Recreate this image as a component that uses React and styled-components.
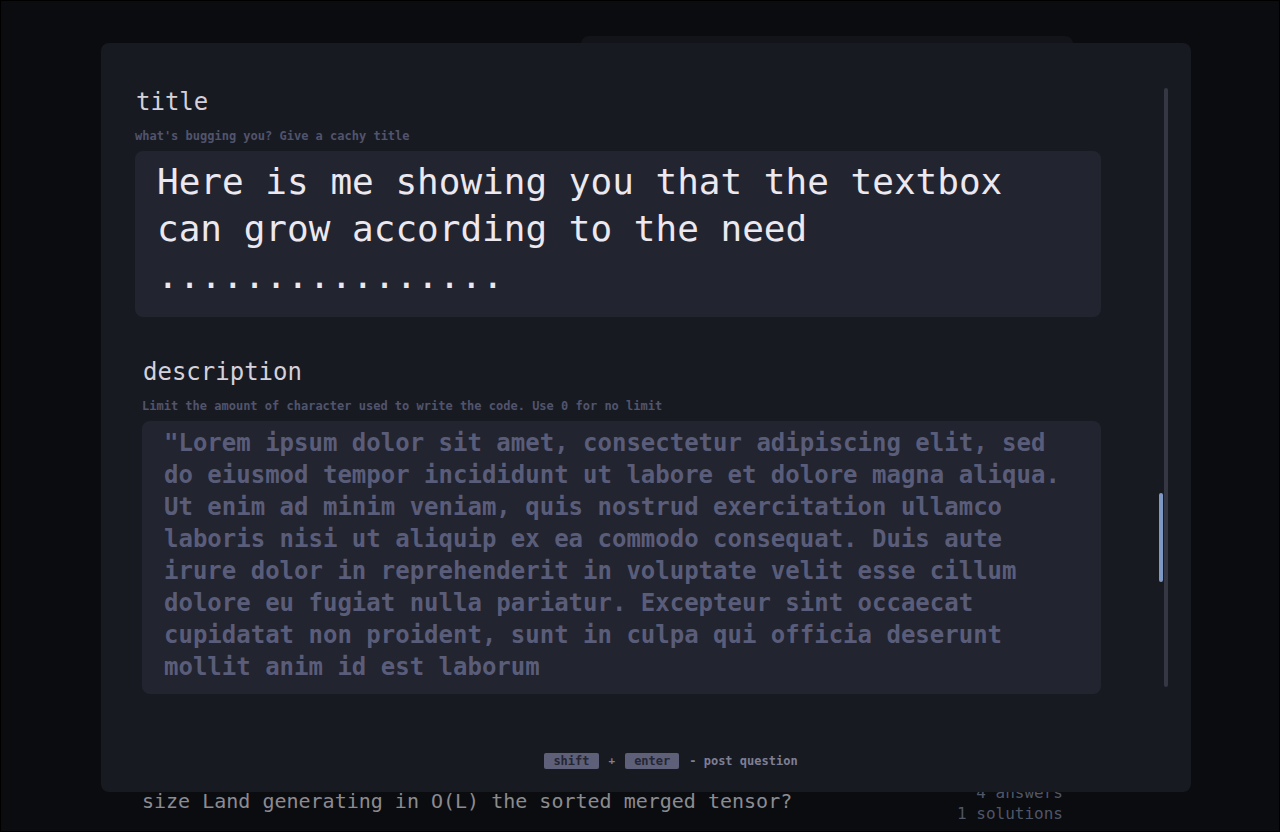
import React from "react";
import styled, { createGlobalStyle } from "styled-components";

const mono = `"DejaVu Sans Mono", "Liberation Mono", monospace`;

const GlobalStyle = createGlobalStyle`
  body {
    margin: 0;
    background: #0b0c10;
    font-family: ${mono};
  }
`;

const Page = styled.div`
  position: relative;
  width: 1280px;
  height: 832px;
  box-sizing: border-box;
  border: 1px solid #000;
  background: #0b0c10;
  overflow: hidden;
`;

const Feed = styled.div`
  display: flex;
  flex-direction: column;
  padding: 35px 216px 0 141px;
`;

const SearchCard = styled.div`
  align-self: flex-end;
  width: 492px;
  height: 60px;
  margin-right: -10px;
  border-radius: 8px;
  background: #13141a;
`;

const QuestionRow = styled.div`
  display: flex;
  justify-content: space-between;
  align-items: flex-start;
  margin-top: 686px;
`;

const QuestionText = styled.div`
  display: flex;
  flex-direction: column;
`;

const QuestionTitle = styled.div`
  margin-top: 6px;
  font-size: 20px;
  line-height: 26px;
  color: #8b8b90;
  white-space: nowrap;
`;

const Excerpt = styled.div`
  margin-top: 14px;
  font-size: 16px;
  line-height: 20px;
  color: #363842;
  white-space: nowrap;
`;

const Stats = styled.div`
  font-size: 16px;
  line-height: 21px;
  color: #4f5668;
  text-align: right;
  white-space: pre;
`;

const Modal = styled.div`
  position: absolute;
  top: 42px;
  left: 100px;
  width: 1090px;
  height: 749px;
  display: flex;
  flex-direction: column;
  border-radius: 8px;
  background: #181a22;
`;

const Body = styled.div`
  flex: 1;
  display: flex;
`;

const Content = styled.div`
  width: 966px;
  padding: 43px 0 0 34px;
  display: flex;
  flex-direction: column;
  gap: 39px;
`;

const Field = styled.div`
  display: flex;
  flex-direction: column;
  margin-left: ${(p) => p.$indent || 0}px;
`;

const Label = styled.label`
  font-size: 24px;
  line-height: 32px;
  color: #d4d1da;
  padding-left: 1px;
`;

const Hint = styled.div`
  margin-top: 10px;
  margin-bottom: 7px;
  font-size: 12px;
  line-height: 16px;
  font-weight: 700;
  color: #51546d;
`;

const Input = styled.textarea`
  display: block;
  width: 100%;
  height: ${(p) => p.$height}px;
  box-sizing: border-box;
  padding: ${(p) => p.$padding};
  border: none;
  outline: none;
  resize: none;
  overflow: hidden;
  border-radius: 8px;
  background: #22242f;
  font-family: ${mono};
  font-size: ${(p) => p.$size}px;
  line-height: ${(p) => p.$lh}px;
  font-weight: ${(p) => p.$weight || 400};
  color: ${(p) => p.$color};
`;

const Rail = styled.div`
  position: relative;
  width: 4px;
  height: 599px;
  margin: 45px 0 0 63px;
  border-radius: 2px;
  background: #353743;
`;

const Thumb = styled.div`
  position: absolute;
  left: -5px;
  top: 405px;
  width: 4px;
  height: 89px;
  border-radius: 2px;
  background: #7d99c4;
`;

const Footer = styled.div`
  display: flex;
  align-items: center;
  justify-content: center;
  gap: 10px;
  padding: 0 0 23px 50px;
  font-size: 12px;
  line-height: 16px;
  font-weight: 700;
  color: #7d7f95;
`;

const Kbd = styled.kbd`
  font-family: ${mono};
  font-size: 12px;
  line-height: 16px;
  padding: 0 9px;
  border-radius: 2px;
  background: #5e607a;
  color: #252633;
`;

const Plus = styled.span`
  color: #7d7f95;
  font-size: 11px;
`;

const App = () => {
  return (
    <>
      <GlobalStyle />
      <Page>
        <Feed>
          <SearchCard />
          <QuestionRow>
            <QuestionText>
              <QuestionTitle>
                size Land generating in O(L) the sorted merged tensor?
              </QuestionTitle>
              <Excerpt>
                Imagine you have K sorted tensors, each with a different length and you
              </Excerpt>
            </QuestionText>
            <Stats>{"4 answers\n1 solutions"}</Stats>
          </QuestionRow>
        </Feed>

        <Modal>
          <Body>
            <Content>
              <Field>
                <Label>title</Label>
                <Hint>what's bugging you? Give a cachy title</Hint>
                <Input
                  $height={166}
                  $padding="7px 22px 18px"
                  $size={36}
                  $lh={47}
                  $color="#ece8ef"
                  defaultValue="Here is me showing you that the textbox can grow according to the need ................"
                />
              </Field>
              <Field $indent={7}>
                <Label>description</Label>
                <Hint>
                  Limit the amount of character used to write the code. Use 0 for no limit
                </Hint>
                <Input
                  $height={273}
                  $padding="6px 22px 11px"
                  $size={24}
                  $lh={32}
                  $weight={700}
                  $color="#5a5d7a"
                  defaultValue={
                    '"Lorem ipsum dolor sit amet, consectetur adipiscing elit, sed do eiusmod tempor incididunt ut labore et dolore magna aliqua. Ut enim ad minim veniam, quis nostrud exercitation ullamco laboris nisi ut aliquip ex ea commodo consequat. Duis aute irure dolor in reprehenderit in voluptate velit esse cillum dolore eu fugiat nulla pariatur. Excepteur sint occaecat cupidatat non proident, sunt in culpa qui officia deserunt mollit anim id est laborum'
                  }
                />
              </Field>
            </Content>
            <Rail>
              <Thumb />
            </Rail>
          </Body>
          <Footer>
            <Kbd>shift</Kbd>
            <Plus>+</Plus>
            <Kbd>enter</Kbd>
            <span>- post question</span>
          </Footer>
        </Modal>
      </Page>
    </>
  );
};

export default App;
